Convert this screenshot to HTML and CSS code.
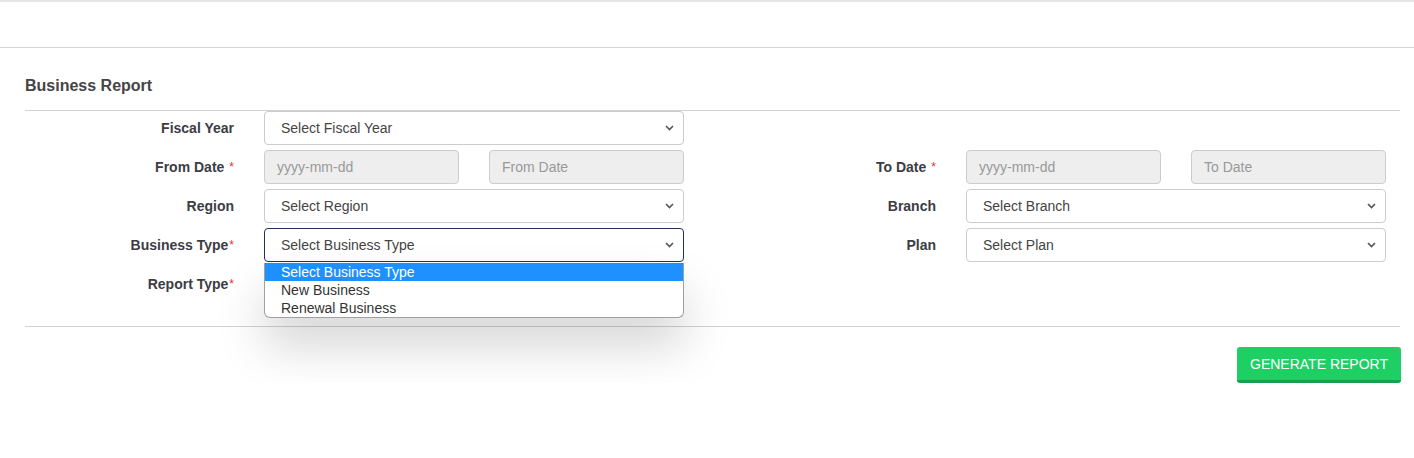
FILE: index.html
```html
<!DOCTYPE html>
<html>
<head>
<meta charset="utf-8">
<title>Business Report</title>
<link rel="stylesheet" href="styles.css">
</head>
<body>
<div class="topbar"></div>
<div class="header"></div>
<div class="panel">
  <div class="panel-title">Business Report</div>
  <div class="form-grid">
    <div class="label">Fiscal Year</div>
    <div class="select"><span>Select Fiscal Year</span><svg class="chev" width="9" height="6" viewBox="0 0 9 6"><path d="M1 1l3.5 3.5L8 1" fill="none" stroke="#555" stroke-width="1.6"/></svg></div>
    <div class="label"></div>
    <div></div>

    <div class="label">From Date<span class="req sp">*</span></div>
    <div class="dates"><div class="input">yyyy-mm-dd</div><div class="input">From Date</div></div>
    <div class="label">To Date<span class="req sp">*</span></div>
    <div class="dates"><div class="input">yyyy-mm-dd</div><div class="input">To Date</div></div>

    <div class="label">Region</div>
    <div class="select"><span>Select Region</span><svg class="chev" width="9" height="6" viewBox="0 0 9 6"><path d="M1 1l3.5 3.5L8 1" fill="none" stroke="#555" stroke-width="1.6"/></svg></div>
    <div class="label">Branch</div>
    <div class="select"><span>Select Branch</span><svg class="chev" width="9" height="6" viewBox="0 0 9 6"><path d="M1 1l3.5 3.5L8 1" fill="none" stroke="#555" stroke-width="1.6"/></svg></div>

    <div class="label">Business Type<span class="req">*</span></div>
    <div class="select-wrap">
      <div class="select focus"><span>Select Business Type</span><svg class="chev" width="9" height="6" viewBox="0 0 9 6"><path d="M1 1l3.5 3.5L8 1" fill="none" stroke="#555" stroke-width="1.6"/></svg></div>
      <ul class="dropdown">
        <li class="active">Select Business Type</li>
        <li>New Business</li>
        <li>Renewal Business</li>
      </ul>
    </div>
    <div class="label">Plan</div>
    <div class="select"><span>Select Plan</span><svg class="chev" width="9" height="6" viewBox="0 0 9 6"><path d="M1 1l3.5 3.5L8 1" fill="none" stroke="#555" stroke-width="1.6"/></svg></div>

    <div class="label">Report Type<span class="req">*</span></div>
    <div></div>
    <div></div>
    <div></div>
  </div>
  <div class="actions">
    <button class="btn">GENERATE REPORT</button>
  </div>
</div>
</body>
</html>
```
FILE: styles.css
```css
* { box-sizing: border-box; }
body {
  margin: 0;
  font-family: "Liberation Sans", Arial, sans-serif;
  font-size: 14px;
  color: #333;
  background: #fff;
}
.topbar { height: 2px; background: #e6e6e6; }
.header { height: 46px; border-bottom: 1px solid #d4d4d4; }
.panel { padding: 0 14px 0 25px; }
.panel-title {
  font-size: 16px;
  line-height: 20px;
  font-weight: bold;
  color: #454545;
  padding: 28px 0 14px;
  border-bottom: 1px solid #d2d2d2;
}
.form-grid {
  display: grid;
  grid-template-columns: 209px 420px 222px 420px;
  column-gap: 30px;
  row-gap: 5px;
  grid-auto-rows: 34px;
  padding-bottom: 25px;
  border-bottom: 1px solid #d2d2d2;
}
.label {
  display: flex;
  align-items: center;
  justify-content: flex-end;
  font-weight: bold;
  color: #3c3c44;
}
.req { color: #e3342f; font-weight: normal; font-size: 12px; margin-left: 1px; }
.req.sp { margin-left: 5px; }
.select {
  height: 34px;
  border: 1px solid #ccc;
  border-radius: 4px;
  display: flex;
  align-items: center;
  justify-content: space-between;
  padding: 0 9px 0 16px;
  color: #444;
  background: #fff;
}
.select.focus { border-color: #22305e; }
.chev { display: block; }
.select-wrap { position: relative; }
.dates { display: flex; gap: 30px; }
.input {
  flex: 1;
  height: 34px;
  border: 1px solid #ccc;
  border-radius: 4px;
  background: #eeeeee;
  color: #999;
  display: flex;
  align-items: center;
  padding: 0 12px;
}
.dropdown {
  position: absolute;
  left: 0;
  right: 0;
  top: 35px;
  margin: 0;
  padding: 0;
  list-style: none;
  background: #fff;
  border: 1px solid #a0a0a0;
  border-top: none;
  border-radius: 0 0 6px 6px;
  box-shadow: 0 28px 48px rgba(0,0,0,0.17);
  z-index: 5;
  overflow: hidden;
}
.dropdown li {
  height: 18px;
  line-height: 18px;
  padding-left: 16px;
  color: #333;
}
.dropdown li.active { background: #1e90ff; color: #fff; }
.actions {
  display: flex;
  justify-content: flex-end;
  padding-top: 20px;
  margin-right: -1px;
}
.btn {
  width: 164px;
  height: 36px;
  border: none;
  border-bottom: 3px solid #17a14c;
  border-radius: 3px;
  background: #1ecf64;
  color: #fff;
  font-family: "Liberation Sans", Arial, sans-serif;
  font-size: 14px;
  padding: 0;
}
```
